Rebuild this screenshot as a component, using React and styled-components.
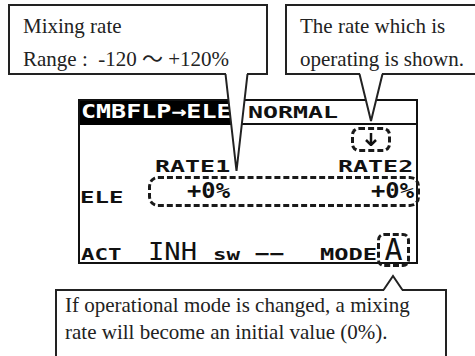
import React from "react";
import styled, { createGlobalStyle } from "styled-components";

const GlobalStyle = createGlobalStyle`
  html, body {
    margin: 0;
    padding: 0;
    background: #fff;
  }
`;

const Canvas = styled.div`
  position: relative;
  width: 475px;
  height: 356px;
  overflow: hidden;
  padding-top: 4px;
  box-sizing: border-box;
  background: #fff;
`;

const TopRow = styled.div`
  display: flex;
  height: 71px;
`;

const Callout = styled.div`
  position: relative;
  z-index: 2;
  flex-shrink: 0;
  box-sizing: border-box;
  width: ${({ $width }) => $width}px;
  height: ${({ $height }) => $height}px;
  margin-left: ${({ $offset }) => $offset}px;
  margin-top: ${({ $top }) => $top || 0}px;
  padding: ${({ $pad }) => $pad};
  border: 2px solid #222;
  background: #fff;
  font-family: "Liberation Serif", "Noto Sans CJK JP", serif;
  font-size: 21px;
  line-height: ${({ $lh }) => $lh}px;
  color: #222;
  white-space: nowrap;
`;

const PointerSvg = styled.svg`
  position: absolute;
  left: ${({ $left }) => $left}px;
  top: ${({ $top }) => $top}px;
  overflow: visible;
`;

const Pointer = ({ left, top, width, height, up }) => {
  const mid = width / 2;
  const fill = up
    ? `1,${height} ${width - 1},${height} ${width - 1},${height - 2} ${mid},0 1,${height - 2}`
    : `1,0 ${width - 1},0 ${width - 1},2 ${mid},${height} 1,2`;
  const line = up
    ? `0.5,${height - 1} ${mid},0 ${width - 0.5},${height - 1}`
    : `0.5,1 ${mid},${height} ${width - 0.5},1`;
  return (
    <PointerSvg $left={left} $top={top} width={width} height={height}>
      <polygon points={fill} fill="#fff" />
      <polyline points={line} fill="none" stroke="#222" strokeWidth="2" />
    </PointerSvg>
  );
};

const DownArrow = () => (
  <svg width="12" height="13" viewBox="0 0 12 13">
    <line x1="6" y1="0" x2="6" y2="12" stroke="#111" strokeWidth="2.5" />
    <polyline points="1,7 6,12 11,7" fill="none" stroke="#111" strokeWidth="2.5" />
  </svg>
);

const Lcd = styled.div`
  width: 340px;
  height: 165px;
  margin: 24px 0 0 78px;
  box-sizing: border-box;
  border: 2px solid #111;
  display: flex;
  flex-direction: column;
  background: #fff;
  color: #111;
`;

const Header = styled.div`
  display: flex;
  height: 22px;
  border-bottom: 2px solid #111;
`;

const TitleBlock = styled.div`
  width: 158px;
  height: 24px;
  padding-left: 1px;
  box-sizing: border-box;
  background: #000;
  color: #fff;
`;

const ConditionName = styled.div`
  padding: 3px 0 0 10px;
`;

const LcdText = styled.span`
  display: inline-block;
  font-family: "DejaVu Sans Mono", monospace;
  font-size: ${({ $size }) => $size}px;
  font-weight: ${({ $thin }) => ($thin ? 400 : 700)};
  line-height: ${({ $lh }) => ($lh ? `${$lh}px` : 1)};
  white-space: pre;
  transform: scaleX(${({ $sx }) => $sx || 1});
  transform-origin: ${({ $origin }) => $origin || "left"} center;
`;

const Body = styled.div`
  flex: 1;
  display: flex;
  flex-direction: column;
`;

const IndicatorRow = styled.div`
  display: flex;
  justify-content: flex-end;
  height: 31px;
  padding: 2px 25px 0 0;
`;

const DashedFrame = styled.div`
  box-sizing: border-box;
  border: 3px dashed #1a1a1a;
  border-radius: ${({ $radius }) => $radius}px;
`;

const ArrowBox = styled(DashedFrame)`
  width: 40px;
  height: 25px;
  display: flex;
  align-items: center;
  justify-content: center;
`;

const Columns = styled.div`
  display: grid;
  grid-template-columns: 68px 84px 184px;
`;

const RateRow = styled(Columns)`
  height: 18px;
`;

const RateLabel = styled.div`
  grid-column: ${({ $col }) => $col};
  text-align: right;
  padding-right: ${({ $pr }) => $pr}px;
`;

const ValueRow = styled(Columns)`
  height: 31px;
`;

const RowLabel = styled.div`
  padding-top: 13px;
`;

const ValueFrame = styled(DashedFrame)`
  grid-column: 2 / 4;
  margin-right: -4px;
  display: grid;
  grid-template-columns: 81px 1fr;
`;

const ValueCell = styled.div`
  text-align: right;
  padding: 2px ${({ $pr }) => $pr}px 0 0;
`;

const BottomRow = styled.div`
  margin-top: auto;
  margin-bottom: -5px;
  display: flex;
  align-items: baseline;
`;

const Slot = styled.div`
  width: ${({ $w }) => $w}px;
  flex-shrink: 0;
  padding-left: ${({ $pl }) => $pl || 0}px;
  box-sizing: border-box;
`;

const ModeBox = styled(DashedFrame)`
  width: 33px;
  height: 34px;
  text-align: center;
`;

const App = () => (
  <Canvas>
    <GlobalStyle />
    <TopRow>
      <Callout $width={260} $height={71} $offset={8} $pad="4px 0 0 13px" $lh={33}>
        Mixing rate
        <br />
        Range :&nbsp;&nbsp;-120 ～ +120%
        <Pointer left={215} top={67} width={23} height={98} />
      </Callout>
      <Callout $width={210} $height={71} $offset={17} $pad="4px 0 0 13px" $lh={33}>
        The rate which is
        <br />
        operating is shown.
        <Pointer left={72} top={67} width={24} height={48} />
      </Callout>
    </TopRow>

    <Lcd>
      <Header>
        <TitleBlock>
          <LcdText $size={20} $sx={1.25}>CMBFLP→ELE</LcdText>
        </TitleBlock>
        <ConditionName>
          <LcdText $size={15} $sx={1.66}>NORMAL</LcdText>
        </ConditionName>
      </Header>
      <Body>
        <IndicatorRow>
          <ArrowBox $radius={8}>
            <DownArrow />
          </ArrowBox>
        </IndicatorRow>
        <RateRow>
          <RateLabel $col={2} $pr={2}>
            <LcdText $size={16} $sx={1.56} $origin="right">RATE1</LcdText>
          </RateLabel>
          <RateLabel $col={3} $pr={3}>
            <LcdText $size={16} $sx={1.56} $origin="right">RATE2</LcdText>
          </RateLabel>
        </RateRow>
        <ValueRow>
          <RowLabel>
            <LcdText $size={16} $sx={1.5}>ELE</LcdText>
          </RowLabel>
          <ValueFrame $radius={10}>
            <ValueCell $pr={2}>
              <LcdText $size={21} $sx={1.13} $origin="right">+0%</LcdText>
            </ValueCell>
            <ValueCell $pr={3}>
              <LcdText $size={21} $sx={1.13} $origin="right">+0%</LcdText>
            </ValueCell>
          </ValueFrame>
        </ValueRow>
        <BottomRow>
          <Slot $w={68} $pl={1}>
            <LcdText $size={16} $sx={1.4}>ACT</LcdText>
          </Slot>
          <Slot $w={65}>
            <LcdText $size={24} $sx={1.13} $thin>INH</LcdText>
          </Slot>
          <Slot $w={42}>
            <LcdText $size={16} $sx={1.4}>sw</LcdText>
          </Slot>
          <Slot $w={65}>
            <LcdText $size={18} $sx={1.35}>−−</LcdText>
          </Slot>
          <Slot $w={57}>
            <LcdText $size={16} $sx={1.48}>MODE</LcdText>
          </Slot>
          <ModeBox $radius={7}>
            <LcdText $size={30} $lh={28} $thin $origin="center">A</LcdText>
          </ModeBox>
        </BottomRow>
      </Body>
    </Lcd>

    <Callout $width={392} $height={80} $offset={55} $top={25} $pad="1px 0 0 8px" $lh={27}>
      If operational mode is changed, a mixing
      <br />
      rate will become an initial value (0%).
      <Pointer left={326} top={-15} width={20} height={15} up />
    </Callout>
  </Canvas>
);

export default App;
